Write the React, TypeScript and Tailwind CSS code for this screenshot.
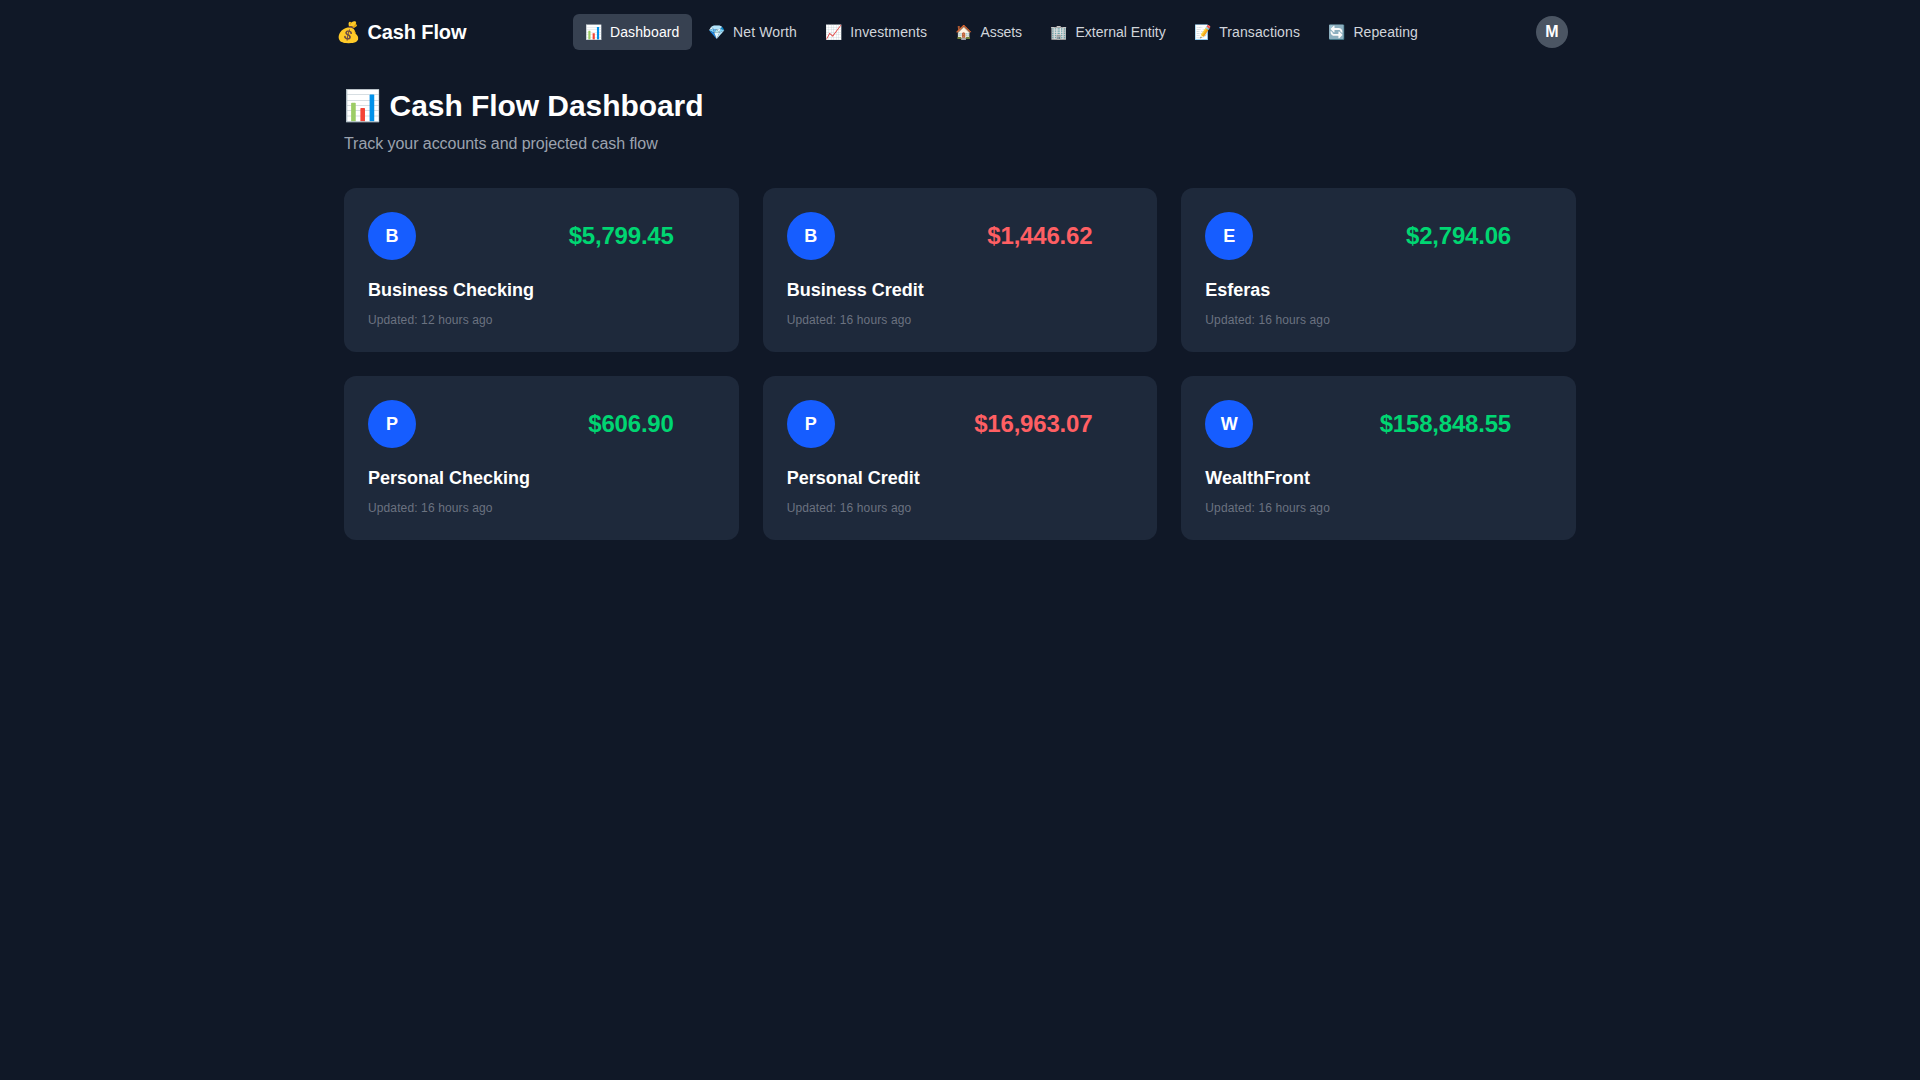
const font = { fontFamily: '"Liberation Sans", "Noto Color Emoji", sans-serif' };

const navItems = [
  { icon: "📊", label: "Dashboard", active: true, track: "tracking-[0.12px]" },
  { icon: "💎", label: "Net Worth", track: "tracking-[0.13px]" },
  { icon: "📈", label: "Investments", track: "tracking-[0.11px]" },
  { icon: "🏠", label: "Assets", track: "tracking-[-0.08px]" },
  { icon: "🏢", label: "External Entity", track: "tracking-normal" },
  { icon: "📝", label: "Transactions", track: "tracking-[0.1px]" },
  { icon: "🔄", label: "Repeating", track: "tracking-[0.07px]" },
];

const accounts = [
  { l: "B", amount: "$5,799.45", name: "Business Checking", updated: "Updated: 12 hours ago", pos: true },
  { l: "B", amount: "$1,446.62", name: "Business Credit", updated: "Updated: 16 hours ago", pos: false },
  { l: "E", amount: "$2,794.06", name: "Esferas", updated: "Updated: 16 hours ago", pos: true },
  { l: "P", amount: "$606.90", name: "Personal Checking", updated: "Updated: 16 hours ago", pos: true },
  { l: "P", amount: "$16,963.07", name: "Personal Credit", updated: "Updated: 16 hours ago", pos: false },
  { l: "W", amount: "$158,848.55", name: "WealthFront", updated: "Updated: 16 hours ago", pos: true },
];

export default function App() {
  return (
    <div style={font} className="min-h-screen bg-[#101827] text-white">
      <nav className="mx-auto flex h-16 max-w-[1280px] items-center justify-between pl-4 pr-8">
        <div className="text-xl font-bold">
          💰 <span className="ml-px tracking-[-0.12px]">Cash Flow</span>
        </div>
        <div className="flex items-center gap-1">
          {navItems.map((n) => (
            <a
              key={n.label}
              className={`flex items-center gap-2 rounded-md px-3 py-2 text-sm ${n.active ? "bg-[#374151] text-white" : "text-[#d1d5db]"}`}
            >
              <span className="-mr-[0.6px] ml-[0.6px]">{n.icon}</span>
              <span className={n.track}>{n.label}</span>
            </a>
          ))}
        </div>
        <div className="flex h-8 w-8 items-center justify-center rounded-full bg-[#4b5563] font-bold">M</div>
      </nav>
      <main className="mx-auto max-w-[1280px] px-6 py-6">
        <h1 className="mb-2 text-3xl font-bold tracking-[-0.06px]">📊 Cash Flow Dashboard</h1>
        <p className="mb-8 text-base tracking-[-0.055px] text-[#9ca3af]">Track your accounts and projected cash flow</p>
        <div className="grid grid-cols-3 gap-6">
          {accounts.map((a) => (
            <div key={a.name + a.amount} className="rounded-xl bg-[#1e293b] p-6">
              <div className="mb-4 flex items-center justify-between">
                <div className="flex h-12 w-12 items-center justify-center rounded-full bg-[#165dff] text-lg font-bold">{a.l}</div>
                <div className={`mr-[41px] text-2xl font-bold tracking-[-0.2px] ${a.pos ? "text-[#00d672]" : "text-[#ff5f63]"}`}>
                  {a.amount}
                </div>
              </div>
              <div className="mb-2 text-lg font-semibold">{a.name}</div>
              <div className="text-xs tracking-[0.12px] text-[#6b7280]">{a.updated}</div>
            </div>
          ))}
        </div>
      </main>
    </div>
  );
}
